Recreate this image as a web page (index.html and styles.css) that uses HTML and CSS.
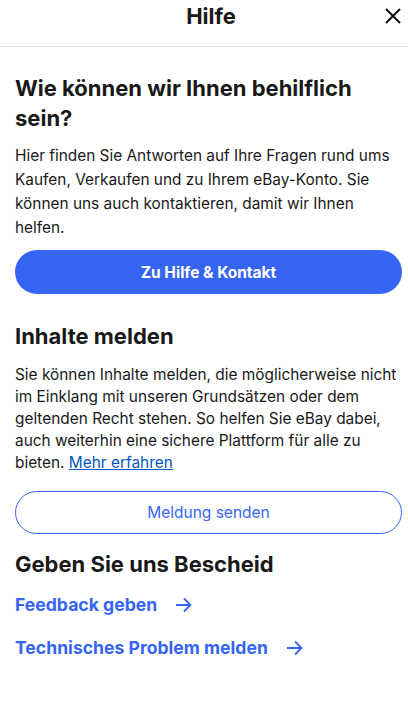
FILE: index.html
```html
<!DOCTYPE html>
<html lang="de">
  <head>
    <meta charset="UTF-8" />
    <meta name="viewport" content="width=device-width, initial-scale=1.0" />
    <title>Hilfe</title>
    <link rel="stylesheet" href="styles.css">
  </head>
  <body>
    <header class="topbar">
      <span></span>
      <h2 class="topbar-title">Hilfe</h2>
      <button class="close" aria-label="Schließen">
        <svg width="18" height="18" viewBox="0 0 18 18">
          <path d="M2 2 L16 16 M16 2 L2 16" stroke="#111" stroke-width="2" fill="none" />
        </svg>
      </button>
    </header>

    <main class="content">
      <h1 class="title">Wie können wir Ihnen behilflich sein?</h1>
      <p class="text text-first">
        Hier finden Sie Antworten auf Ihre Fragen rund ums Kaufen, Verkaufen und zu Ihrem eBay-Konto. Sie können uns auch kontaktieren, damit wir Ihnen helfen.
      </p>
      <a class="btn btn-primary">Zu Hilfe &amp; Kontakt</a>

      <h2 class="title section">Inhalte melden</h2>
      <p class="text text-second">
        Sie können Inhalte melden, die möglicherweise nicht im Einklang mit unseren Grundsätzen oder dem geltenden Recht stehen. So helfen Sie eBay dabei, auch weiterhin eine sichere Plattform für alle zu bieten. <a class="inline-link">Mehr erfahren</a>
      </p>
      <a class="btn btn-outline">Meldung senden</a>

      <h2 class="title section-last">Geben Sie uns Bescheid</h2>
      <div class="links">
        <a class="arrow-link">
          Feedback geben
          <svg width="17" height="16" viewBox="0 0 17 16">
            <path d="M1 8 H15.5 M9 1.5 L15.5 8 L9 14.5" stroke="#3665f3" stroke-width="1.8" fill="none" />
          </svg>
        </a>
        <a class="arrow-link">
          Technisches Problem melden
          <svg width="17" height="16" viewBox="0 0 17 16">
            <path d="M1 8 H15.5 M9 1.5 L15.5 8 L9 14.5" stroke="#3665f3" stroke-width="1.8" fill="none" />
          </svg>
        </a>
      </div>
    </main>
  </body>
</html>
```

FILE: styles.css
```css
* {
  box-sizing: border-box;
  margin: 0;
  padding: 0;
  font-family: "Inter", "Liberation Sans", sans-serif;
}
body {
  background-color: #fff;
  color: #191919;
}
.topbar {
  display: grid;
  grid-template-columns: 1fr auto 1fr;
  align-items: center;
  height: 47px;
  padding-left: 14px;
  padding-bottom: 14px;
  border-bottom: 1px solid #e5e5e5;
}
.topbar-title {
  font-size: 22px;
  font-weight: 700;
  line-height: 32px;
}
.close {
  justify-self: end;
  margin-right: 3px;
  border: none;
  background: none;
  width: 24px;
  height: 24px;
  display: flex;
  align-items: center;
  justify-content: center;
}
.content {
  padding: 0 6px 40px 15px;
}
.title {
  font-size: 22px;
  font-weight: 700;
  line-height: 30px;
  margin-top: 26px;
}
.section {
  margin-top: 27px;
}
.section-last {
  margin-top: 15px;
}
.text {
  font-size: 15.4px;
  line-height: 24px;
}
.text-first {
  margin-top: 11px;
}
.text-second {
  margin-top: 13px;
  line-height: 22px;
}
.inline-link {
  color: #0654ba;
  text-decoration: underline;
}
.btn {
  display: flex;
  align-items: center;
  justify-content: center;
  height: 44px;
  border-radius: 22px;
  font-size: 15.5px;
  text-decoration: none;
}
.btn-primary {
  margin-top: 10px;
  background-color: #3665f3;
  color: #fff;
  font-weight: 700;
}
.btn-outline {
  margin-top: 17px;
  height: 43px;
  border: 1px solid #3665f3;
  color: #3665f3;
}
.links {
  display: flex;
  flex-direction: column;
  align-items: flex-start;
  gap: 19px;
  margin-top: 14px;
}
.arrow-link {
  display: flex;
  align-items: center;
  gap: 18px;
  font-size: 17.6px;
  font-weight: 700;
  line-height: 24px;
  color: #3665f3;
}
```
